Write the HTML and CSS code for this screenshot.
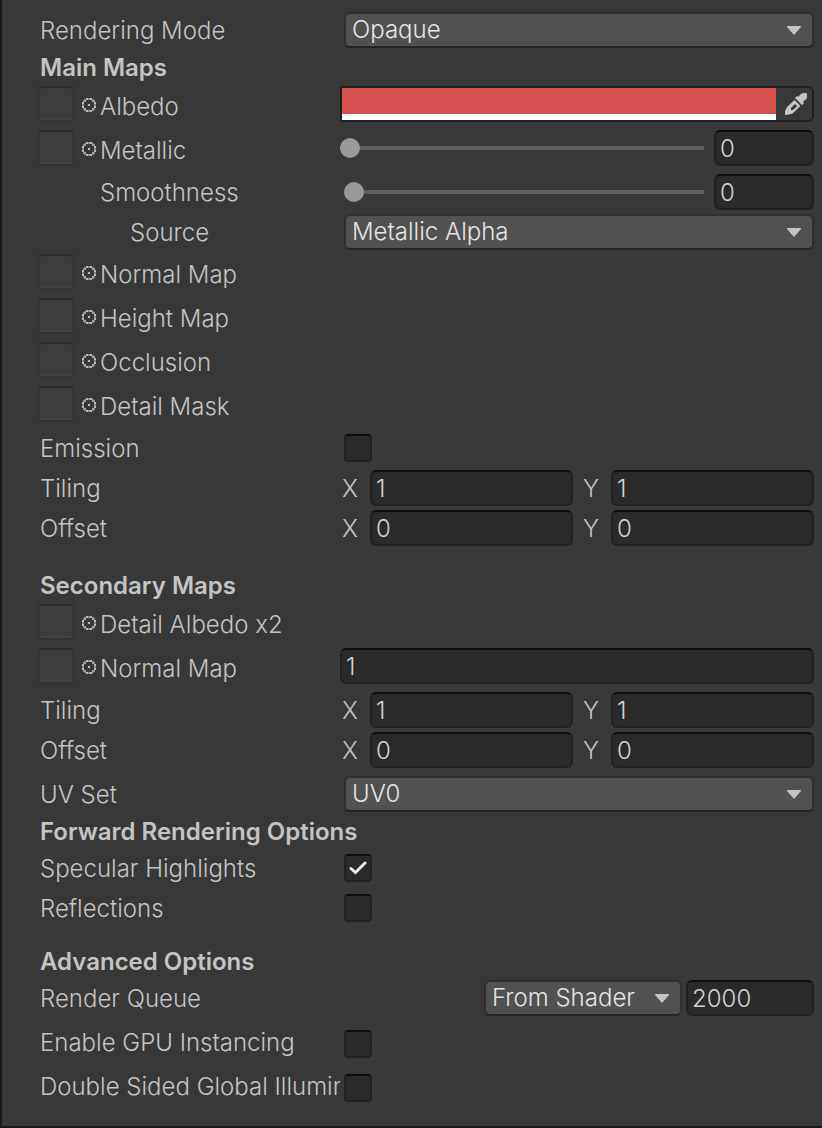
FILE: index.html
```
<!DOCTYPE html>
<html lang="en">
<head>
<meta charset="utf-8">
<title>Material Inspector</title>
<link rel="stylesheet" href="styles.css">
</head>
<body>
<svg class="defs" aria-hidden="true">
  <symbol id="ring" viewBox="0 0 14 14">
    <g fill="currentColor" shape-rendering="crispEdges">
      <path d="M4 0h2v2H4zM8 0h2v2H8zM4 12h2v2H4zM8 12h2v2H8zM0 4h2v2H0zM0 8h2v2H0zM12 4h2v2h-2zM12 8h2v2h-2zM6 6h2v2H6z"/>
      <path opacity=".8" d="M2 2h2v2H2zM10 2h2v2h-2zM2 10h2v2H2zM10 10h2v2h-2z"/>
      <path opacity=".6" d="M6 0h2v2H6zM6 12h2v2H6zM0 6h2v2H0zM12 6h2v2h-2z"/>
      <path opacity=".6" d="M2 1h2v1H2zM1 2h1v2H1zM10 1h2v1h-2zM12 2h1v2h-1zM1 10h1v2H1zM2 12h2v1H2zM12 10h1v2h-1zM10 12h2v1h-2z"/>
    </g>
  </symbol>
  <symbol id="arrow" viewBox="0 0 14 9">
    <path fill="currentColor" d="M0 0h14v1L7 9 0 1z"/>
  </symbol>
</svg>
<main class="inspector">
  <div class="row">
    <label class="name" for="mode">Rendering Mode</label>
    <div class="dropdown"><select id="mode"><option>Opaque</option></select><svg class="arrow"><use href="#arrow"/></svg></div>
  </div>

  <h2 class="heading">Main Maps</h2>
  <div class="row texture">
    <div class="slot"><button class="thumb" aria-label="Albedo texture"></button><button class="pick" aria-label="Select albedo texture"><svg><use href="#ring"/></svg></button><span class="name">Albedo</span></div>
    <div class="color">
      <button class="swatch" aria-label="Albedo color"></button>
      <button class="dropper" aria-label="Pick color">
        <svg viewBox="0 0 22 22"><path fill="currentColor" fill-rule="evenodd" d="M14 3C15.500 1 17 0 18.500 0H21l1 1v3c0 1.500-1.500 3-3.500 4v3L17 12 10 5l1-1.500h2.500zM9.500 7l6 6-8 7.500L4 21.500l-4 .5v-4l2-4zm.5 4L6 15v2h2l4-4z"/></svg>
      </button>
    </div>
  </div>
  <div class="row texture">
    <div class="slot"><button class="thumb" aria-label="Metallic texture"></button><button class="pick" aria-label="Select metallic texture"><svg><use href="#ring"/></svg></button><label class="name" for="metallic">Metallic</label></div>
    <div class="slide"><input class="range" id="metallic" type="range" min="0" max="1" step="0.01" value="0"><input class="field number" type="text" value="0" aria-label="Metallic value"></div>
  </div>
  <div class="row">
    <label class="name indent" for="smooth">Smoothness</label>
    <div class="slide inset"><input class="range" id="smooth" type="range" min="0" max="1" step="0.01" value="0"><input class="field number" type="text" value="0" aria-label="Smoothness value"></div>
  </div>
  <div class="row">
    <label class="name indent deep" for="source">Source</label>
    <div class="dropdown"><select id="source"><option>Metallic Alpha</option></select><svg class="arrow"><use href="#arrow"/></svg></div>
  </div>
  <div class="row texture">
    <div class="slot"><button class="thumb" aria-label="Normal map texture"></button><button class="pick" aria-label="Select normal map"><svg><use href="#ring"/></svg></button><span class="name">Normal Map</span></div>
  </div>
  <div class="row texture">
    <div class="slot"><button class="thumb" aria-label="Height map texture"></button><button class="pick" aria-label="Select height map"><svg><use href="#ring"/></svg></button><span class="name">Height Map</span></div>
  </div>
  <div class="row texture">
    <div class="slot"><button class="thumb" aria-label="Occlusion texture"></button><button class="pick" aria-label="Select occlusion"><svg><use href="#ring"/></svg></button><span class="name">Occlusion</span></div>
  </div>
  <div class="row texture">
    <div class="slot"><button class="thumb" aria-label="Detail mask texture"></button><button class="pick" aria-label="Select detail mask"><svg><use href="#ring"/></svg></button><span class="name">Detail Mask</span></div>
  </div>
  <div class="row">
    <label class="name" for="emission">Emission</label>
    <input class="check" id="emission" type="checkbox">
  </div>
  <div class="row">
    <span class="name">Tiling</span>
    <div class="vector"><label for="tx">X</label><input class="field" id="tx" type="text" value="1"><label for="ty">Y</label><input class="field" id="ty" type="text" value="1"></div>
  </div>
  <div class="row">
    <span class="name">Offset</span>
    <div class="vector"><label for="ox">X</label><input class="field" id="ox" type="text" value="0"><label for="oy">Y</label><input class="field" id="oy" type="text" value="0"></div>
  </div>

  <h2 class="heading spaced">Secondary Maps</h2>
  <div class="row texture">
    <div class="slot"><button class="thumb" aria-label="Detail albedo texture"></button><button class="pick" aria-label="Select detail albedo"><svg><use href="#ring"/></svg></button><span class="name">Detail Albedo x2</span></div>
  </div>
  <div class="row texture">
    <div class="slot"><button class="thumb" aria-label="Secondary normal map texture"></button><button class="pick" aria-label="Select secondary normal map"><svg><use href="#ring"/></svg></button><label class="name" for="normal2">Normal Map</label></div>
    <input class="field" id="normal2" type="text" value="1">
  </div>
  <div class="row">
    <span class="name">Tiling</span>
    <div class="vector"><label for="tx2">X</label><input class="field" id="tx2" type="text" value="1"><label for="ty2">Y</label><input class="field" id="ty2" type="text" value="1"></div>
  </div>
  <div class="row loose">
    <span class="name">Offset</span>
    <div class="vector"><label for="ox2">X</label><input class="field" id="ox2" type="text" value="0"><label for="oy2">Y</label><input class="field" id="oy2" type="text" value="0"></div>
  </div>
  <div class="row">
    <label class="name" for="uv">UV Set</label>
    <div class="dropdown"><select id="uv"><option>UV0</option></select><svg class="arrow"><use href="#arrow"/></svg></div>
  </div>

  <h2 class="heading">Forward Rendering Options</h2>
  <div class="row">
    <label class="name" for="spec">Specular Highlights</label>
    <span class="tick"><input class="check" id="spec" type="checkbox" checked><svg class="mark" viewBox="0 0 18 14"><path d="M2 7.500l4.500 4L16 2" fill="none" stroke="currentColor" stroke-width="3" stroke-linecap="round"/></svg></span>
  </div>
  <div class="row">
    <label class="name" for="refl">Reflections</label>
    <input class="check" id="refl" type="checkbox">
  </div>

  <h2 class="heading spaced last">Advanced Options</h2>
  <div class="row loose">
    <label class="name" for="queue">Render Queue</label>
    <div class="queue">
      <div class="dropdown"><select id="queue"><option>From Shader</option></select><svg class="arrow"><use href="#arrow"/></svg></div>
      <input class="field" type="text" value="2000" aria-label="Render queue value">
    </div>
  </div>
  <div class="row loose low">
    <label class="name" for="gpu">Enable GPU Instancing</label>
    <input class="check" id="gpu" type="checkbox">
  </div>
  <div class="row low">
    <label class="name" for="gi">Double Sided Global Illumination</label>
    <input class="check" id="gi" type="checkbox">
  </div>
</main>
</body>
</html>
```
FILE: styles.css
```
* { box-sizing: border-box; }

body {
  margin: 0;
  background: #383838;
  color: #c4c4c4;
  font: 350 24px/34px Inter, "Liberation Sans", sans-serif;
}

button, input, select {
  margin: 0;
  padding: 0;
  border: 0;
  border-radius: 0;
  background: none;
  color: inherit;
  font: inherit;
  appearance: none;
}

svg { display: block; }

.defs { position: absolute; width: 0; height: 0; }

.inspector {
  display: flex;
  flex-direction: column;
  gap: 4px;
  min-height: 100vh;
  padding: 12px 8px 22px 36px;
  border-left: 2px solid #1a1a1a;
  border-bottom: 2px solid #1a1a1a;
}

.row {
  display: grid;
  grid-template-columns: 302px minmax(0, 1fr);
  align-items: center;
  min-height: 36px;
}

.texture, .loose { margin-bottom: 4px; }

.name {
  padding: 2px 0 0 2px;
  overflow: hidden;
  white-space: nowrap;
}

.indent { padding-left: 62px; }
.deep { padding-left: 92px; }

.heading {
  margin: 0;
  padding: 2px 0 0 2px;
  font-size: 24px;
  font-weight: 600;
  line-height: 28px;
}

.spaced { margin-top: 20px; }
.last { margin-top: 16px; }

.slot { display: flex; align-items: center; }
.slot .name { padding: 6px 0 0 4px; line-height: 30px; }

.thumb {
  width: 36px;
  height: 36px;
  border: 2px solid #353535;
  border-top-color: #2c2c2c;
  background: #3d3d3d;
  box-shadow: inset 0 -2px #434343, inset 0 0 0 2px #3b3b3b;
}

.pick { margin-left: 8px; padding-top: 2px; color: #bcbcbc; }
.pick svg { width: 14px; height: 14px; }

.dropdown {
  position: relative;
  margin-left: 4px;
}

.dropdown select {
  display: block;
  width: 100%;
  height: 36px;
  padding: 0 32px 0 6px;
  border: 2px solid #303030;
  border-bottom-color: #242424;
  border-radius: 6px;
  background: #515151;
  color: #e4e4e4;
  line-height: 32px;
}

.arrow {
  position: absolute;
  top: 14px;
  right: 13px;
  width: 14px;
  height: 9px;
  color: #c4c4c4;
  pointer-events: none;
}

.color {
  display: flex;
  height: 36px;
  border: 2px solid #202020;
  border-radius: 0 6px 6px 0;
}

.swatch {
  flex: 1;
  border-bottom: 6px solid #fff;
  background: #d75050;
}

.dropper {
  display: grid;
  place-items: center;
  width: 36px;
  padding-left: 4px;
  color: #c4c4c4;
}

.dropper svg { width: 22px; height: 22px; }

.slide { display: flex; align-items: center; gap: 10px; }
.inset { margin-left: 4px; }

.range {
  flex: 1;
  min-width: 0;
  height: 20px;
  background: linear-gradient(#5e5e5e, #5e5e5e) center / 100% 4px no-repeat;
}

.range::-webkit-slider-thumb {
  width: 20px;
  height: 20px;
  border-radius: 50%;
  background: #999;
  appearance: none;
}

.field {
  width: 100%;
  min-width: 0;
  height: 36px;
  padding: 1px 4px 0;
  border: 2px solid #212121;
  border-top-color: #0d0d0d;
  border-radius: 6px;
  background: #2a2a2a;
  color: #d2d2d2;
}

.number { width: 100px; }

.check {
  display: block;
  width: 28px;
  height: 28px;
  margin-left: 4px;
  border: 2px solid #212121;
  border-top-color: #0d0d0d;
  border-radius: 4px;
  background: #2a2a2a;
}

.low .check { margin-top: 4px; }

.tick { position: relative; }

.mark {
  position: absolute;
  top: 7px;
  left: 9px;
  width: 18px;
  height: 14px;
  color: #eee;
  pointer-events: none;
}

.vector {
  display: grid;
  grid-template-columns: 28px 1fr 38px 1fr;
  padding-left: 2px;
}

.vector label { padding-top: 2px; }
.vector label:nth-of-type(2) { padding-left: 10px; }

.queue {
  display: grid;
  grid-template-columns: 198px 128px;
  justify-content: end;
  gap: 4px;
}

.queue .dropdown { margin-left: 0; }
```
